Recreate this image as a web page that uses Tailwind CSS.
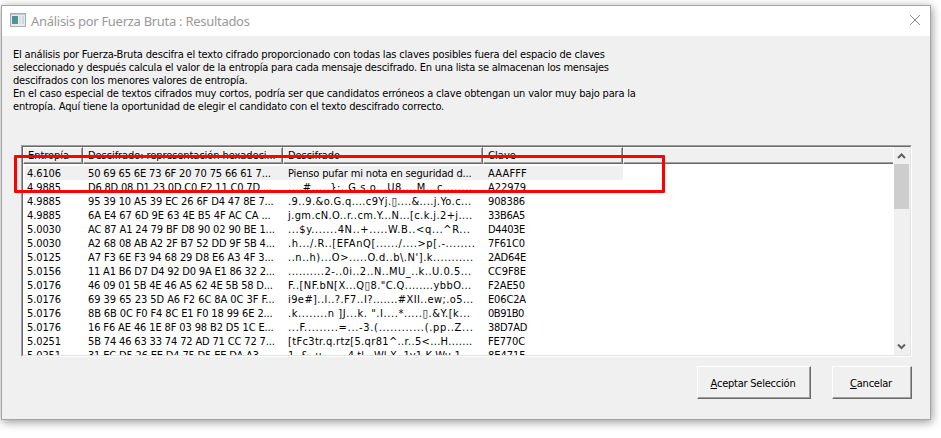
<!DOCTYPE html>
<html lang="es">
<head>
<meta charset="utf-8">
<title>Análisis por Fuerza Bruta : Resultados</title>
<script src="https://cdn.jsdelivr.net/npm/@tailwindcss/browser@4"></script>
</head>
<body class="h-[438px] w-[941px] overflow-hidden bg-white pt-[5px] pl-px font-['DejaVu_Sans_Condensed','DejaVu_Sans',sans-serif] text-[11px] leading-[13px] text-black">
<main class="relative flex h-[415px] w-[930px] flex-col border border-[#a5a5a5] bg-[#f0f0f0] shadow-[1px_2px_9px_rgba(0,0,0,0.42)]">
  <header class="flex h-[30px] shrink-0 items-center bg-white pr-[10px] pl-[8px] text-[#999]">
    <svg class="mb-[3px] h-[14px] w-[16px]" viewBox="0 0 16 14">
      <defs><linearGradient id="g" x1="0" y1="0" x2="1" y2="1"><stop offset="0" stop-color="#4f86b4"/><stop offset="1" stop-color="#4da36c"/></linearGradient></defs>
      <rect x=".5" y=".5" width="15" height="13" fill="#e9ebee" stroke="#a9adb3"/>
      <path d="M1 1.5h14" stroke="#c3c8ce"/>
      <rect x="2" y="3" width="6" height="8" fill="url(#g)"/>
      <rect x="9" y="3" width="2" height="8" fill="#dcdfe3"/>
      <rect x="12" y="3" width="2" height="8" fill="#c4dce4"/>
    </svg>
    <h1 class="ml-[5px] font-['Noto_Sans',sans-serif] text-[13px] leading-[18px] whitespace-nowrap"><span data-w="219" data-font="13px 'Noto Sans'">Análisis por Fuerza Bruta : Resultados</span></h1>
    <svg class="mr-[-1px] mb-[3px] ml-auto h-[12px] w-[12px]" viewBox="0 0 12 12" fill="none" stroke="#8c8c8c" stroke-width="1"><path d="M1 1l10 10M11 1L1 11"/></svg>
  </header>
  <section class="mt-[12px] h-[65px] shrink-0 pl-[11px] whitespace-nowrap">
    <div><span data-w="593">El análisis por Fuerza-Bruta descifra el texto cifrado proporcionado con todas las claves posibles fuera del espacio de claves</span></div>
    <div><span data-w="597">seleccionado y después calcula el valor de la entropía para cada mensaje descifrado. En una lista se almacenan los mensajes</span></div>
    <div><span data-w="235">descifrados con los menores valores de entropía.</span></div>
    <div><span data-w="624">En el caso especial de textos cifrados muy cortos, podría ser que candidatos erróneos a clave obtengan un valor muy bajo para la</span></div>
    <div><span data-w="432">entropía. Aquí tiene la oportunidad de elegir el candidato con el texto descifrado correcto.</span></div>
  </section>
  <section class="mt-[32px] ml-[19px] h-[212px] w-[891px] shrink-0 border border-t-[#a0a0a0] border-r-white border-b-white border-l-[#a0a0a0]">
    <div class="flex h-full border border-t-[#696969] border-r-[#e3e3e3] border-b-[#e3e3e3] border-l-[#696969] bg-white">
      <div class="flex w-[870px] flex-col overflow-hidden">
        <div class="grid h-[17px] shrink-0 grid-cols-[60px_200px_200px_140px_1fr] whitespace-nowrap">
          <div class="border-t border-r border-b border-l border-t-white border-r-[#696969] border-b-[#696969] border-l-white bg-[#f0f0f0] pt-px shadow-[inset_-1px_-1px_#a0a0a0]"><span class="ml-[4px]" data-w="41">Entropía</span></div>
          <div class="border-t border-r border-b border-l border-t-white border-r-[#696969] border-b-[#696969] border-l-white bg-[#f0f0f0] pt-px shadow-[inset_-1px_-1px_#a0a0a0]"><span class="ml-[4px]" data-w="188">Descifrado: representación hexadeci...</span></div>
          <div class="border-t border-r border-b border-l border-t-white border-r-[#696969] border-b-[#696969] border-l-white bg-[#f0f0f0] pt-px shadow-[inset_-1px_-1px_#a0a0a0]"><span class="ml-[4px]" data-w="52">Descifrado</span></div>
          <div class="border-t border-r border-b border-l border-t-white border-r-[#696969] border-b-[#696969] border-l-white bg-[#f0f0f0] pt-px shadow-[inset_-1px_-1px_#a0a0a0]"><span class="ml-[4px]" data-w="28">Clave</span></div>
          <div class="border-t border-b border-l border-t-white border-b-[#696969] border-l-white bg-[#f0f0f0] shadow-[inset_0_-1px_#a0a0a0]"></div>
        </div>
        <div id="rows" class="mt-[2px] whitespace-pre"></div>
      </div>
      <div class="ml-[1px] flex w-[16px] flex-col bg-[#f0f0f0]">
        <svg class="h-[17px] w-[16px]" viewBox="0 0 16 17" fill="none" stroke="#606060" stroke-width="2"><path d="M4 11l3.5-3.5L11 11"/></svg>
        <div class="h-[45px] w-[15px] bg-[#cdcdcd]"></div>
        <svg class="mt-auto h-[17px] w-[16px]" viewBox="0 0 16 17" fill="none" stroke="#606060" stroke-width="2"><path d="M4 6.5L7.5 10 11 6.5"/></svg>
      </div>
    </div>
  </section>
  <footer class="mt-[9px] flex gap-[21px] pl-[695px] whitespace-nowrap">
    <button class="flex h-[33px] w-[114px] items-center justify-center border border-t-white border-r-[#696969] border-b-[#696969] border-l-white pt-px pr-[2px] shadow-[inset_-1px_-1px_#a0a0a0]"><span data-w="85"><u class="underline-offset-1">A</u>ceptar Selección</span></button>
    <button class="flex h-[33px] w-[80px] items-center justify-center border border-t-white border-r-[#696969] border-b-[#696969] border-l-white pt-px pr-[2px] shadow-[inset_-1px_-1px_#a0a0a0]"><span data-w="42"><u class="underline-offset-1">C</u>ancelar</span></button>
  </footer>
  <div class="absolute top-[149px] left-[12px] h-[38px] w-[651px] rounded-[1px] border-3 border-[#f00]"></div>
</main>
<script>
// Each record: entropy, hex text and its width, decoded text and its width, key and its width
const data = [
  ["4.6106","50 69 65 6E 73 6F 20 70 75 66 61 7...",183,"Pienso pufar mi nota en seguridad d...",184,"AAAFFF",39],
  ["4.9885","D6 8D 08 D1 23 0D C0 E2 11 C0 7D ...",184,"....#.....}:..G.s.o...U8....M...c........",185,"A22979",38],
  ["4.9885","95 39 10 A5 39 EC 26 6F D4 47 8E 7...",186,".9..9.&o.G.q....c9Yj.▯....&....j.Yo.c...",184,"908386",37],
  ["4.9885","6A E4 67 6D 9E 63 4E B5 4F AC CA ...",183,"j.gm.cN.O..r..cm.Y...N...[c.k.j.2+j....",185,"33B6A5",37],
  ["5.0030","AC 87 A1 24 79 BF D8 90 02 90 BE 1...",187,"...$y.......4N..+.....W.B..<q...^R...",183,"D4403E",37],
  ["5.0030","A2 68 08 AB A2 2F B7 52 DD 9F 5B 4...",187,".h.../.R..[EFAnQ[....../....>p[.-........",188,"7F61C0",37],
  ["5.0125","A7 F3 6E F3 94 68 29 D8 E6 A3 4F 3...",186,"..n..h)...O>.....O.d..b\\.N'].k...........",186,"2AD64E",38],
  ["5.0156","11 A1 B6 D7 D4 92 D0 9A E1 86 32 2...",187,"..........2-..0i..2..N..MU_..k..U.0.5...",184,"CC9F8E",38],
  ["5.0176","46 09 01 5B 4E 46 A5 62 4E 5B 58 D...",185,"F..[NF.bN[X...Q▯8.\"C.Q........ybbO...",184,"F2AE50",37],
  ["5.0176","69 39 65 23 5D A6 F2 6C 8A 0C 3F F...",187,"i9e#]..l..?.F7..I?.......#XII..ew;.o5...",186,"E06C2A",38],
  ["5.0176","8B 6B 0C F0 F4 8C E1 F0 18 99 6E 2...",185,".k........n ]J...k. \".I....*.....▯.&Y.[k...",183,"0B91B0",36],
  ["5.0176","16 F6 AE 46 1E 8F 03 98 B2 D5 1C E...",186,"...F.........=...-3.(............(.pp..Z...",186,"38D7AD",39],
  ["5.0251","5B 74 46 63 33 74 72 AD 71 CC 72 7...",187,"[tFc3tr.q.rtz[5.qr81^..r..5<...H.......",185,"FE770C",37],
  ["5.0251","31 EC D5 26 EE D4 75 D5 EE DA A3 ...",183,"1..&..u........4.tl...Wl.X..1v1.K.Wu.1...",183,"8E471F",37]
];
const rows = document.getElementById("rows");
data.forEach((r, i) => {
  const row = document.createElement("div");
  row.className = "ml-[2px] grid h-[14px] w-[598px] grid-cols-[63px_200px_200px_135px] pt-px leading-[14px]" + (i === 0 ? " bg-[#f0f0f0]" : "");
  [[r[0],34],[r[1],r[2]],[r[3],r[4]],[r[5],r[6]]].forEach(([text, w], c) => {
    const cell = document.createElement("div");
    cell.className = c === 0 ? "pl-[2px]" : "";
    const span = document.createElement("span");
    span.textContent = text;
    span.dataset.w = w;
    cell.append(span);
    row.append(cell);
  });
  rows.append(row);
});
const ctx = document.createElement("canvas").getContext("2d");
document.querySelectorAll("[data-w]").forEach(el => {
  ctx.font = el.dataset.font || "11px 'DejaVu Sans Condensed', 'DejaVu Sans', sans-serif";
  ctx.letterSpacing = "0.01px";
  el.style.letterSpacing = (el.dataset.w - ctx.measureText(el.textContent).width) / el.textContent.length + "px";
});
</script>
</body>
</html>
